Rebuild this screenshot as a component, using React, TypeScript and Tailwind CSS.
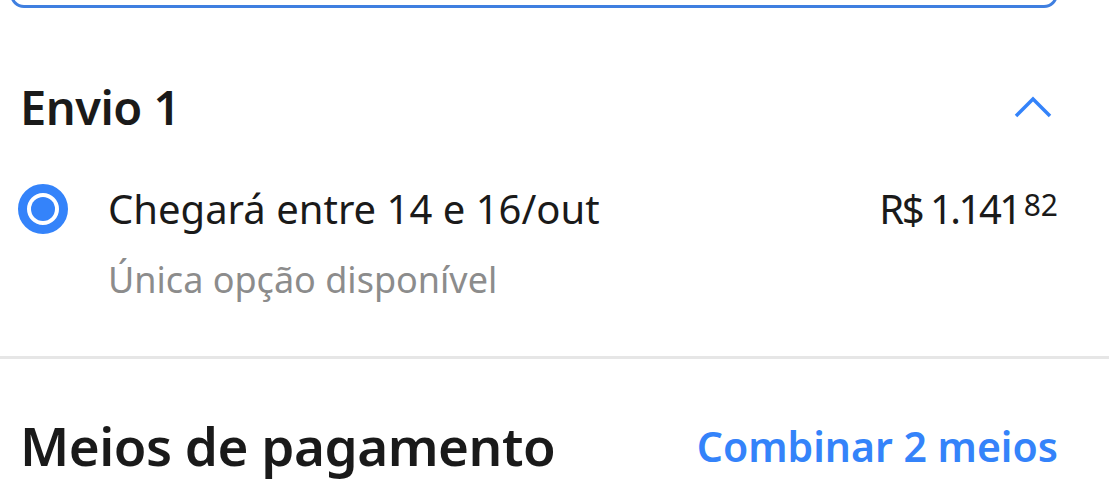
import { useState } from 'react';

const font = { fontFamily: '"Noto Sans", "Liberation Sans", sans-serif' };

export default function App() {
  const [open, setOpen] = useState(true);

  return (
    <div className="w-[1109px] h-[500px] overflow-hidden bg-white text-[#1a1a1a]" style={font}>
      {/* bottom edge of the card above */}
      <div className="ml-[10px] w-[1048px] h-[40px] -mt-[32px] rounded-[14px] border-[3px] border-[#3f7fe0]" />

      <div className="pl-[20px] pr-[51px]">
        <div className="flex items-center justify-between pt-[64px] h-[134px]">
          <h2 className="text-[47px] leading-[56px] font-semibold tracking-[-0.5px]">Envio 1</h2>
          <button onClick={() => setOpen(!open)} className="mr-[6px] text-[#3483fa]">
            <svg width="38" height="24" viewBox="0 0 38 24" fill="none" stroke="currentColor" strokeWidth="3.5">
              <path d="M2 21 L19 4 L36 21" />
            </svg>
          </button>
        </div>

        <div className="flex items-start pt-[44px]">
          <div className="w-[50px] h-[50px] -ml-[2px] mt-[-2px] rounded-full border-[9px] border-[#3483fa] flex items-center justify-center">
            <div className="w-[24px] h-[24px] rounded-full bg-[#3483fa]" />
          </div>
          <div className="ml-[40px] flex-1">
            <p className="text-[40px] leading-[46px]">Chegará entre 14 e 16/out</p>
            <p className="text-[36px] leading-[44px] mt-[26px] text-[#8c8c8c]">Única opção disponível</p>
          </div>
          <p className="flex items-start text-[40px] leading-[46px] tracking-[-2.5px]">
            R$ 1.141<span className="text-[30px] leading-[30px] mt-[4px] ml-[4px] tracking-normal">82</span>
          </p>
        </div>
      </div>

      <div className="mt-[54px] h-[3px] bg-[#e6e6e6]" />

      <div className="pl-[20px] pr-[51px] pt-[57px] flex items-center justify-between">
        <h2 className="text-[53px] leading-[60px] font-semibold tracking-[-0.5px]">Meios de pagamento</h2>
        <button className="text-[41px] leading-[46px] font-semibold text-[#3483fa]">Combinar 2 meios</button>
      </div>
    </div>
  );
}
